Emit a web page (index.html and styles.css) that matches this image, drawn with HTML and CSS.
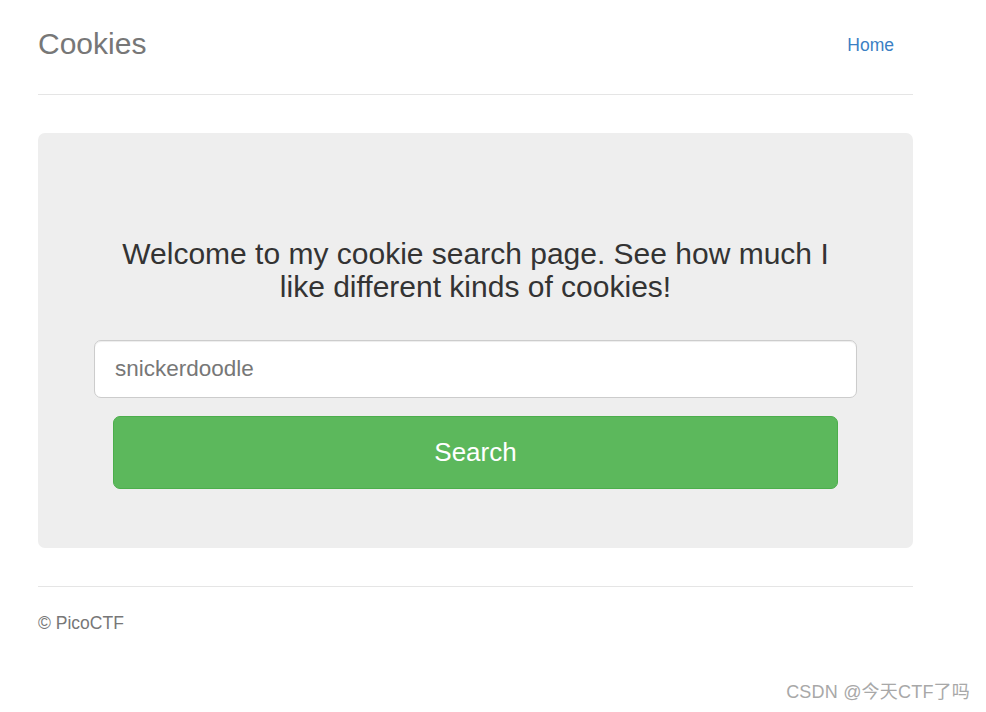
FILE: index.html
```html
<!DOCTYPE html>
<html lang="en">
<head>
<meta charset="utf-8">
<title>Cookies</title>
<link rel="stylesheet" href="styles.css">
</head>
<body>
<div class="container">
  <header class="header">
    <h3 class="brand">Cookies</h3>
    <nav class="nav">
      <a class="nav-link" href="#">Home</a>
    </nav>
  </header>

  <main class="jumbotron">
    <form class="search-form">
      <h3 class="welcome">Welcome to my cookie search page. See how much I like different kinds of cookies!</h3>
      <input class="search-input" type="text" placeholder="snickerdoodle">
      <button class="search-btn" type="button">Search</button>
    </form>
  </main>

  <footer class="footer">
    <p class="copy">&copy; PicoCTF</p>
  </footer>
</div>
<div class="watermark">CSDN @今天CTF了吗</div>
</body>
</html>
```

FILE: styles.css
```css
* { box-sizing: border-box; }

html, body {
  margin: 0;
  padding: 0;
  background: #fff;
}

body {
  font-family: "Liberation Sans", Arial, sans-serif;
  font-size: 17.5px;
  line-height: 1.42857;
  color: #333;
  position: relative;
  min-height: 712px;
}

.container {
  width: 875px;
  margin-left: 38px;
  padding-top: 19px;
}

.header {
  display: flex;
  justify-content: space-between;
  align-items: flex-start;
  padding-bottom: 24px;
  border-bottom: 1px solid #e5e5e5;
}

.brand {
  margin: 0;
  font-size: 30px;
  font-weight: 400;
  line-height: 50px;
  color: #777;
}

.nav {
  margin-top: 1px;
}

.nav-link {
  display: block;
  padding: 12.5px 19px;
  line-height: 25px;
  font-size: 17.5px;
  color: #3b7fc4;
  text-decoration: none;
}

.jumbotron {
  margin-top: 38px;
  background: #eeeeee;
  border-radius: 7px;
  padding: 104px 56px 59px;
  text-align: center;
}

.search-form {
  display: flex;
  flex-direction: column;
  align-items: stretch;
}

.welcome {
  margin: 0 0 37px;
  font-size: 30px;
  font-weight: 400;
  line-height: 33px;
  color: #333;
  padding: 0 26px;
}

.search-input {
  display: block;
  width: 100%;
  height: 58px;
  padding: 0 20px;
  font-family: "Liberation Sans", Arial, sans-serif;
  font-size: 22.5px;
  color: #555;
  background: #fff;
  border: 1px solid #ccc;
  border-radius: 7px;
  box-shadow: inset 0 1px 1px rgba(0,0,0,0.075);
  outline: none;
}

.search-input::placeholder {
  color: #777;
}

.search-btn {
  display: block;
  margin: 18px 19px 0;
  height: 73px;
  font-family: "Liberation Sans", Arial, sans-serif;
  font-size: 26px;
  color: #fff;
  background: #5cb85c;
  border: 1px solid #4cae4c;
  border-radius: 7px;
  cursor: pointer;
}

.footer {
  margin-top: 38px;
  border-top: 1px solid #e5e5e5;
  padding-top: 24px;
}

.copy {
  margin: 0;
  color: #777;
  font-size: 17.5px;
  line-height: 25px;
}

.watermark {
  position: absolute;
  right: 16px;
  top: 680px;
  font-family: "Liberation Sans", "Noto Sans CJK SC", sans-serif;
  font-size: 18px;
  line-height: 25px;
  letter-spacing: 0.2px;
  color: #a8a8a8;
}
```
